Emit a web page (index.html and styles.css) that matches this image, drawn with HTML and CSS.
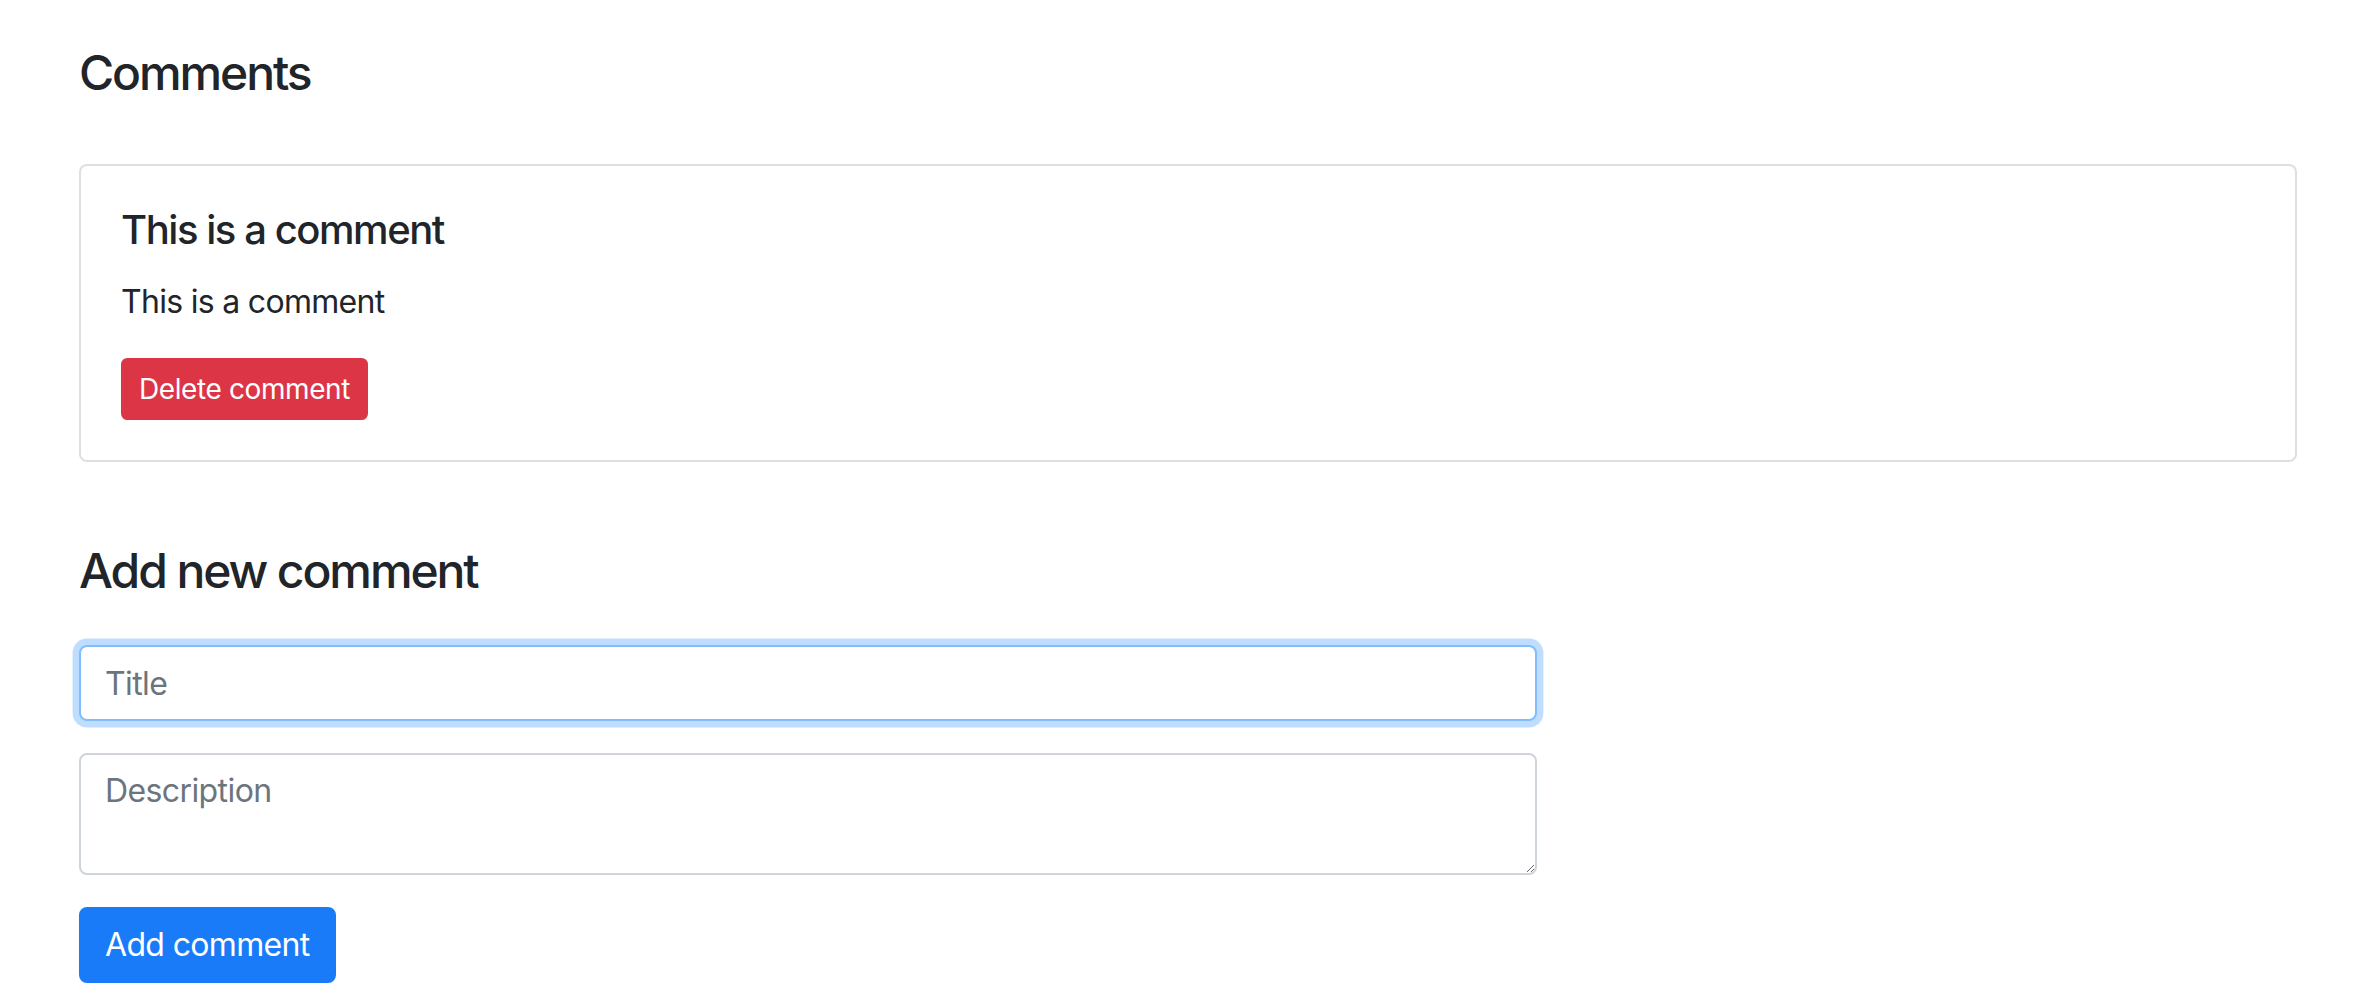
FILE: index.html
```html
<!DOCTYPE html>
<html lang="en">
<head>
<meta charset="utf-8">
<title>Comments</title>
<link rel="stylesheet" href="styles.css">
</head>
<body>
<main class="page">
  <h4 class="section-title">Comments</h4>
  <div class="card">
    <div class="card-body">
      <h5 class="card-title">This is a comment</h5>
      <p class="card-text">This is a comment</p>
      <button class="btn btn-sm btn-danger" type="button">Delete comment</button>
    </div>
  </div>

  <h4 class="section-title add-title">Add new comment</h4>
  <form class="comment-form">
    <div class="form-group">
      <input class="form-control is-focused" type="text" placeholder="Title">
    </div>
    <div class="form-group">
      <textarea class="form-control form-textarea" placeholder="Description"></textarea>
    </div>
    <button class="btn btn-primary" type="button">Add comment</button>
  </form>
</main>
</body>
</html>
```

FILE: styles.css
```css
* {
  box-sizing: border-box;
}

html, body {
  margin: 0;
  background: #ffffff;
}

body {
  font-family: Inter, "Noto Sans", "Liberation Sans", sans-serif;
  color: #212529;
  font-size: 32px;
  line-height: 1.5;
}

.page {
  padding: 44px 79px 0;
}

.section-title {
  margin: 0;
  font-size: 48px;
  line-height: 57.6px;
  font-weight: 500;
  letter-spacing: -2.1px;
}

.card {
  margin-top: 62px;
  border: 2px solid rgba(0, 0, 0, 0.125);
  border-radius: 8px;
  background: #fff;
}

.card-body {
  padding: 40px;
}

.card-title {
  margin: 0 0 24px;
  font-size: 40px;
  line-height: 48px;
  font-weight: 500;
  letter-spacing: -1.45px;
}

.card-text {
  margin: 0 0 32px;
  letter-spacing: -0.7px;
}

.btn {
  display: inline-block;
  font-family: inherit;
  font-weight: 400;
  color: #fff;
  border: 2px solid transparent;
  cursor: pointer;
  font-size: 32px;
  line-height: 48px;
  padding: 12px 24px;
  border-radius: 8px;
  letter-spacing: -0.65px;
}

.btn-sm {
  font-size: 28px;
  line-height: 42px;
  padding: 8px 16px;
  border-radius: 6.4px;
  letter-spacing: -0.4px;
}

.btn-danger {
  background: #dc3545;
  border-color: #dc3545;
}

.btn-primary {
  background: #1a7bf8;
  border-color: #1a7bf8;
}

.add-title {
  margin-top: 80px;
}

.comment-form {
  margin-top: 46px;
  max-width: 1458px;
}

.form-group {
  margin-bottom: 32px;
}

.form-control {
  display: block;
  width: 100%;
  font-family: inherit;
  font-size: 32px;
  line-height: 48px;
  color: #495057;
  background: #fff;
  border: 2px solid #ced4da;
  border-radius: 8px;
  padding: 12px 24px;
  height: 76px;
  outline: none;
  letter-spacing: -0.6px;
}

.form-control::placeholder {
  color: #6c757d;
  opacity: 1;
}

.is-focused {
  border-color: #80bdff;
  box-shadow: 0 0 0 6.4px rgba(0, 123, 255, 0.25);
}

.form-textarea {
  height: 122px;
  resize: vertical;
}
```
